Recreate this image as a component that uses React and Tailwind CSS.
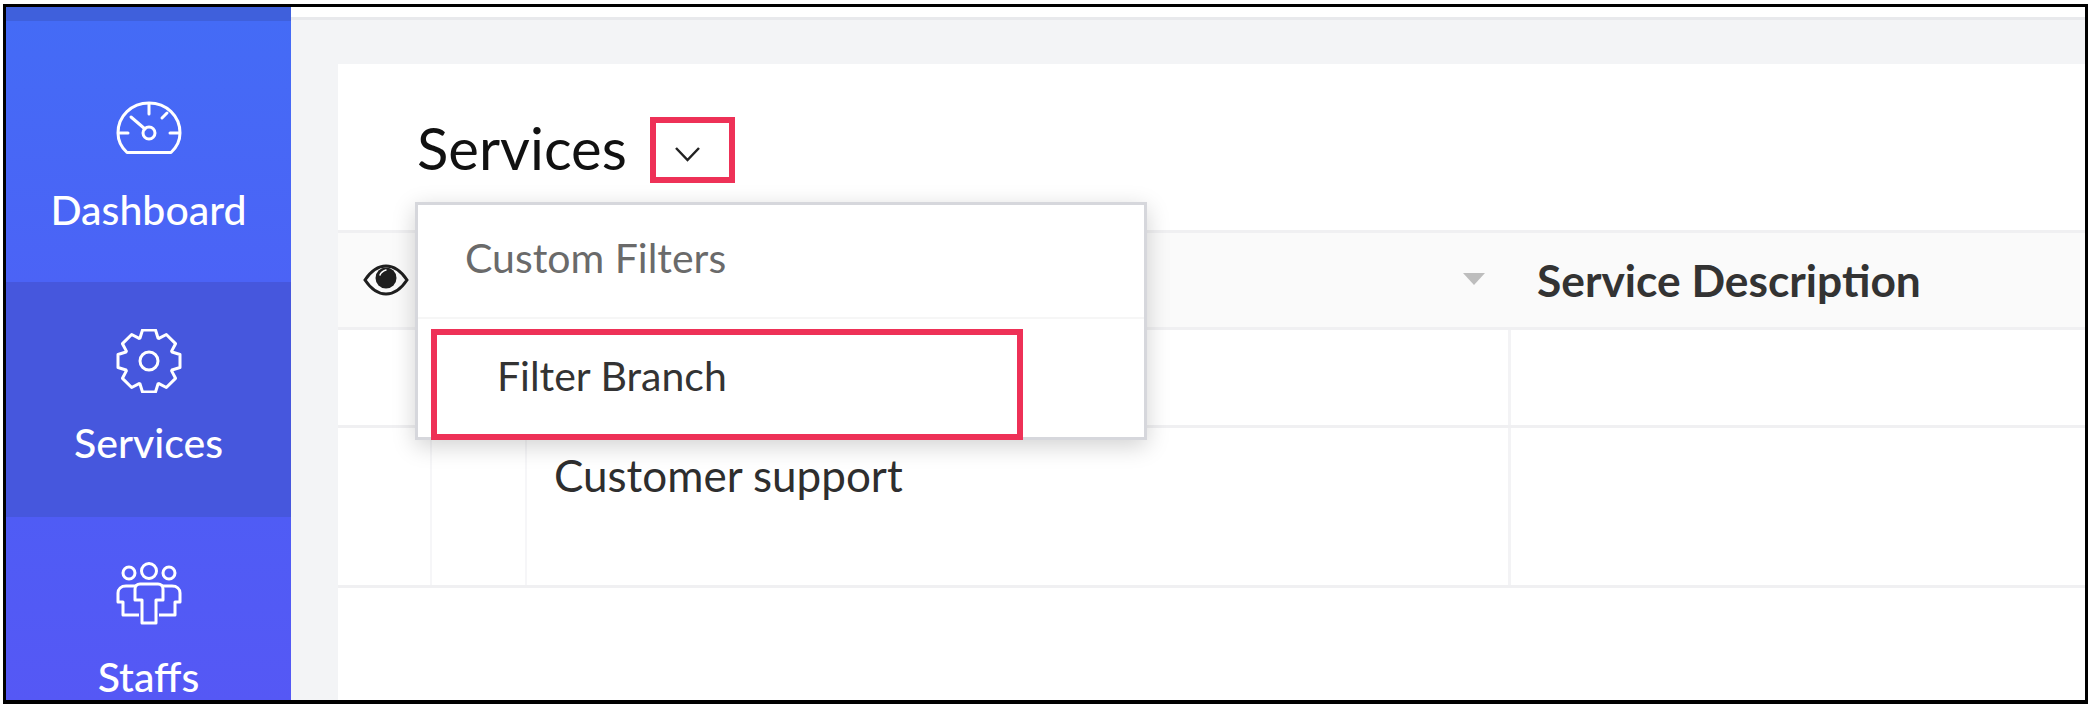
import React from "react";

const font = { fontFamily: "Lato, 'Noto Sans', sans-serif" };

function gearPath() {
  const cx = 33, cy = 32, R = 31, r = 23;
  const parts = [];
  for (let i = 0; i < 8; i++) {
    const a = (i * Math.PI) / 4;
    const pts = [[r, -9], [R, -6.500], [R, 6.500], [r, 9]];
    for (const [x, y] of pts) {
      const px = cx + x * Math.cos(a) - y * Math.sin(a);
      const py = cy + x * Math.sin(a) + y * Math.cos(a);
      parts.push(`${px.toFixed(2)} ${py.toFixed(2)}`);
    }
  }
  return `M${parts.join("L")}Z`;
}

function Gauge() {
  return (
    <svg width="66" height="54" viewBox="0 0 66 54" fill="none" stroke="white" strokeWidth="3" strokeLinecap="round" strokeLinejoin="round">
      <path d="M11 51.500 C5 46 2 39 2 32 C2 15 15.500 2 33 2 C50.500 2 64 15 64 32 C64 39 61 46 55 51.500 Z" />
      <path d="M33 3v10M3 32h9M54 32h9M51 12l-5 5" />
      <circle cx="33" cy="32" r="6" />
      <path d="M29 28 L15 16" />
    </svg>
  );
}

function Gear() {
  return (
    <svg width="66" height="64" viewBox="0 0 66 64" fill="none" stroke="white" strokeWidth="3" strokeLinejoin="round">
      <path d={gearPath()} />
      <circle cx="33" cy="32" r="9" />
    </svg>
  );
}

function People() {
  return (
    <svg width="66" height="64" viewBox="0 0 66 64" fill="none" stroke="white" strokeWidth="3" strokeLinejoin="round">
      <circle cx="13" cy="11" r="6" />
      <circle cx="33" cy="9" r="7.500" />
      <circle cx="53" cy="11" r="6" />
      <path d="M20 24H10c-5 0-8 3-8 7v9h5v13h16" />
      <path d="M46 24h10c5 0 8 3 8 7v9h-5v13H43" />
      <path d="M24 22h18c3 0 5 2 5 5v11h-7v23H26V38h-7V27c0-3 2-5 5-5z" />
    </svg>
  );
}

function Eye() {
  return (
    <svg width="46" height="32" viewBox="0 0 46 32" fill="none">
      <path d="M2 16C8 7 15 2 23 2s15 5 21 14c-6 9-13 14-21 14S8 25 2 16z" stroke="#1f1f1f" strokeWidth="3" />
      <circle cx="23" cy="14" r="10.500" fill="#1f1f1f" />
      <path d="M17 11c1-3 3-4 6-5" stroke="white" strokeWidth="1.500" strokeLinecap="round" />
    </svg>
  );
}

function NavItem({ icon, label, className, iconClass }) {
  return (
    <div className={`flex flex-col items-center shrink-0 ${className}`}>
      <div className={iconClass}>{icon}</div>
      <span className="text-[41px] leading-[46px] font-medium text-white">{label}</span>
    </div>
  );
}

export default function App() {
  return (
    <div className="w-[2094px] h-[704px] bg-white overflow-hidden pl-[3px] pt-[4px] pr-[6px]" style={font}>
      <div className="w-[2085px] h-[700px] border-[3px] border-b-[4px] border-black flex overflow-hidden">
        <aside className="w-[285px] shrink-0 flex flex-col bg-[#4f5ef5] overflow-hidden">
          <div className="h-[14px] shrink-0 bg-[#3f60dc]" />
          <NavItem
            label="Dashboard"
            icon={<Gauge />}
            iconClass="mt-[80px] mb-[32px] h-[54px]"
            className="h-[261px] bg-gradient-to-b from-[#446bf6] to-[#4b63f6]"
          />
          <NavItem
            label="Services"
            icon={<Gear />}
            iconClass="mt-[47px] mb-[27px] h-[64px]"
            className="h-[235px] bg-[#4657dd]"
          />
          <NavItem
            label="Staffs"
            icon={<People />}
            iconClass="mt-[45px] mb-[28px] h-[64px]"
            className="h-[183px] bg-gradient-to-b from-[#4f5cf5] to-[#5558f5]"
          />
        </aside>
        <main className="flex-1 flex flex-col bg-[#f3f4f6] min-w-0">
          <div className="h-[10px] bg-white" />
          <div className="h-[3px] bg-[#e8e9ec]" />
          <section className="relative mt-[44px] ml-[47px] flex-1 bg-white flex flex-col">
            <div className="h-[166px] flex items-start pl-[79px] pt-[50px]">
              <h1 className="text-[58px] leading-[68px] font-normal text-[#111]">Services</h1>
              <svg className="ml-[47px] mt-[32px]" width="27" height="17" viewBox="0 0 27 17" fill="none" stroke="#222" strokeWidth="2.500">
                <path d="M2 2l11.500 12L25 2" />
              </svg>
            </div>
            <div className="h-[100px] flex items-center border-y-[3px] border-t-[#f0f0f2] border-b-[#f0f0f2] bg-[#fafafa]">
              <div className="w-[96px] flex justify-center"><Eye /></div>
              <div className="w-[1076px] flex justify-end pr-[25px]">
                <span className="w-0 h-0 border-x-[11px] border-x-transparent border-t-[12px] border-t-[#bdbdbd] mt-[-2px]" />
              </div>
              <span className="ml-[27px] text-[44.3px] leading-[50px] font-bold text-[#333]">Service Description</span>
            </div>
            <div className="h-[98px] flex border-b-[3px] border-[#f0f0f2]">
              <div className="w-[94px] border-r-[2px] border-[#f6f6f8]" />
              <div className="w-[95px] border-r-[2px] border-[#f6f6f8]" />
              <div className="w-[984px] border-r-[3px] border-[#f3f3f5]" />
            </div>
            <div className="h-[160px] flex border-b-[3px] border-[#f0f0f2]">
              <div className="w-[94px] border-r-[2px] border-[#f6f6f8]" />
              <div className="w-[95px] border-r-[2px] border-[#f6f6f8]" />
              <div className="w-[984px] border-r-[3px] border-[#f3f3f5] pl-[27px] pt-[24px]">
                <span className="text-[44px] leading-[46px] text-[#2e2e2e]">Customer support</span>
              </div>
            </div>
            <div className="absolute left-[312px] top-[53px] w-[85px] h-[66px] border-[6px] border-[#ee3157]" />
            <div className="absolute left-[77px] top-[138px] w-[732px] h-[238px] bg-white border-[3px] border-[#d6d7dc] shadow-[0_6px_22px_rgba(0,0,0,0.18)]">
              <div className="h-[114px] border-b-[2px] border-[#f6f6f6] pl-[47px] pt-[30px]">
                <span className="text-[41px] leading-[46px] text-[#6a6a6a]">Custom Filters</span>
              </div>
              <div className="pl-[79px] pt-[34px]">
                <span className="text-[41px] leading-[46px] text-[#333]">Filter Branch</span>
              </div>
              <div className="absolute left-[13px] top-[124px] w-[592px] h-[111px] border-[6px] border-[#ee3157]" />
            </div>
          </section>
        </main>
      </div>
    </div>
  );
}
